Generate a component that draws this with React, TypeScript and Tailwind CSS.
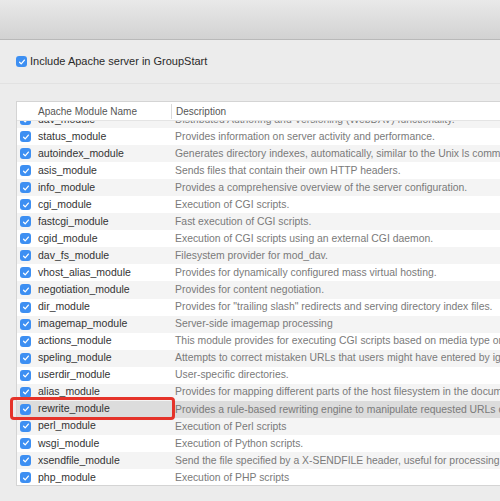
import React from 'react';

type Mod = { name: string; desc: string };

const modules: Mod[] = [
  { name: 'dav_module', desc: 'Distributed Authoring and Versioning (WebDAV) functionality.' },
  { name: 'status_module', desc: 'Provides information on server activity and performance.' },
  { name: 'autoindex_module', desc: 'Generates directory indexes, automatically, similar to the Unix ls command.' },
  { name: 'asis_module', desc: 'Sends files that contain their own HTTP headers.' },
  { name: 'info_module', desc: 'Provides a comprehensive overview of the server configuration.' },
  { name: 'cgi_module', desc: 'Execution of CGI scripts.' },
  { name: 'fastcgi_module', desc: 'Fast execution of CGI scripts.' },
  { name: 'cgid_module', desc: 'Execution of CGI scripts using an external CGI daemon.' },
  { name: 'dav_fs_module', desc: 'Filesystem provider for mod_dav.' },
  { name: 'vhost_alias_module', desc: 'Provides for dynamically configured mass virtual hosting.' },
  { name: 'negotiation_module', desc: 'Provides for content negotiation.' },
  { name: 'dir_module', desc: 'Provides for "trailing slash" redirects and serving directory index files.' },
  { name: 'imagemap_module', desc: 'Server-side imagemap processing' },
  { name: 'actions_module', desc: 'This module provides for executing CGI scripts based on media type or request method.' },
  { name: 'speling_module', desc: 'Attempts to correct mistaken URLs that users might have entered by ignoring capitalization.' },
  { name: 'userdir_module', desc: 'User-specific directories.' },
  { name: 'alias_module', desc: 'Provides for mapping different parts of the host filesystem in the document tree.' },
  { name: 'rewrite_module', desc: 'Provides a rule-based rewriting engine to manipulate requested URLs on the fly.' },
  { name: 'perl_module', desc: 'Execution of Perl scripts' },
  { name: 'wsgi_module', desc: 'Execution of Python scripts.' },
  { name: 'xsendfile_module', desc: 'Send the file specified by a X-SENDFILE header, useful for processing scripts.' },
  { name: 'php_module', desc: 'Execution of PHP scripts' },
];

const Check = () => (
  <span className="w-[11px] h-[11px] rounded-[3px] bg-[#3d8ff2] flex items-center justify-center shrink-0">
    <svg viewBox="0 0 10 10" className="w-[8px] h-[8px]" fill="none" stroke="white" strokeWidth={1.6} strokeLinecap="round" strokeLinejoin="round">
      <path d="M2 5.3l2 2L8 2.6" />
    </svg>
  </span>
);

export default function App() {
  return (
    <div className="w-[500px] h-[501px] bg-[#ececec] overflow-hidden font-['Liberation_Sans',Arial,sans-serif]">
      {/* Toolbar */}
      <div className="h-[40px] bg-gradient-to-b from-[#e9e9e9] to-[#d2d2d2] border-b border-[#b9b9b9]" />

      {/* Include option */}
      <div className="h-[44px] flex items-center pl-[16px] gap-[3px] border-b border-[#e2e2e2]">
        <Check />
        <span className="text-[11px] text-[#2a2a2a]">Include Apache server in GroupStart</span>
      </div>

      {/* Table */}
      <div className="mt-[17px] ml-[16px] w-[500px] bg-white border border-[#d4d4d4] relative">
        <div className="h-[19px] flex items-center border-b border-[#e4e4e4] text-[10px] text-[#555]">
          <div className="w-[155px] shrink-0 pl-[21px] h-[15px] flex items-center border-r border-[#dadada]">Apache Module Name</div>
          <div className="pl-[4px]">Description</div>
        </div>
        <div className="h-[364px] overflow-hidden">
          <div className="-mt-[10px]">
            {modules.map((m, i) => {
              const selected = m.name === 'rewrite_module';
              const bg = selected ? 'bg-[#dcdcdc]' : i % 2 === 0 ? 'bg-[#f4f4f4]' : 'bg-white';
              return (
                <div key={m.name} className={`h-[17.05px] flex items-center ${bg} whitespace-nowrap`}>
                  <div className="w-[155px] shrink-0 flex items-center pl-[3px] gap-[7px]">
                    <Check />
                    <span className="text-[10.5px] text-[#333]">{m.name}</span>
                  </div>
                  <span className="pl-[3px] text-[10.4px] text-[#7a7a7a]">{m.desc}</span>
                </div>
              );
            })}
          </div>
        </div>
        {/* Highlight box */}
        <div className="absolute left-[-7px] top-[295px] w-[165px] h-[23px] border-[3px] border-[#e5332a] rounded-[4px]" />
      </div>
    </div>
  );
}
